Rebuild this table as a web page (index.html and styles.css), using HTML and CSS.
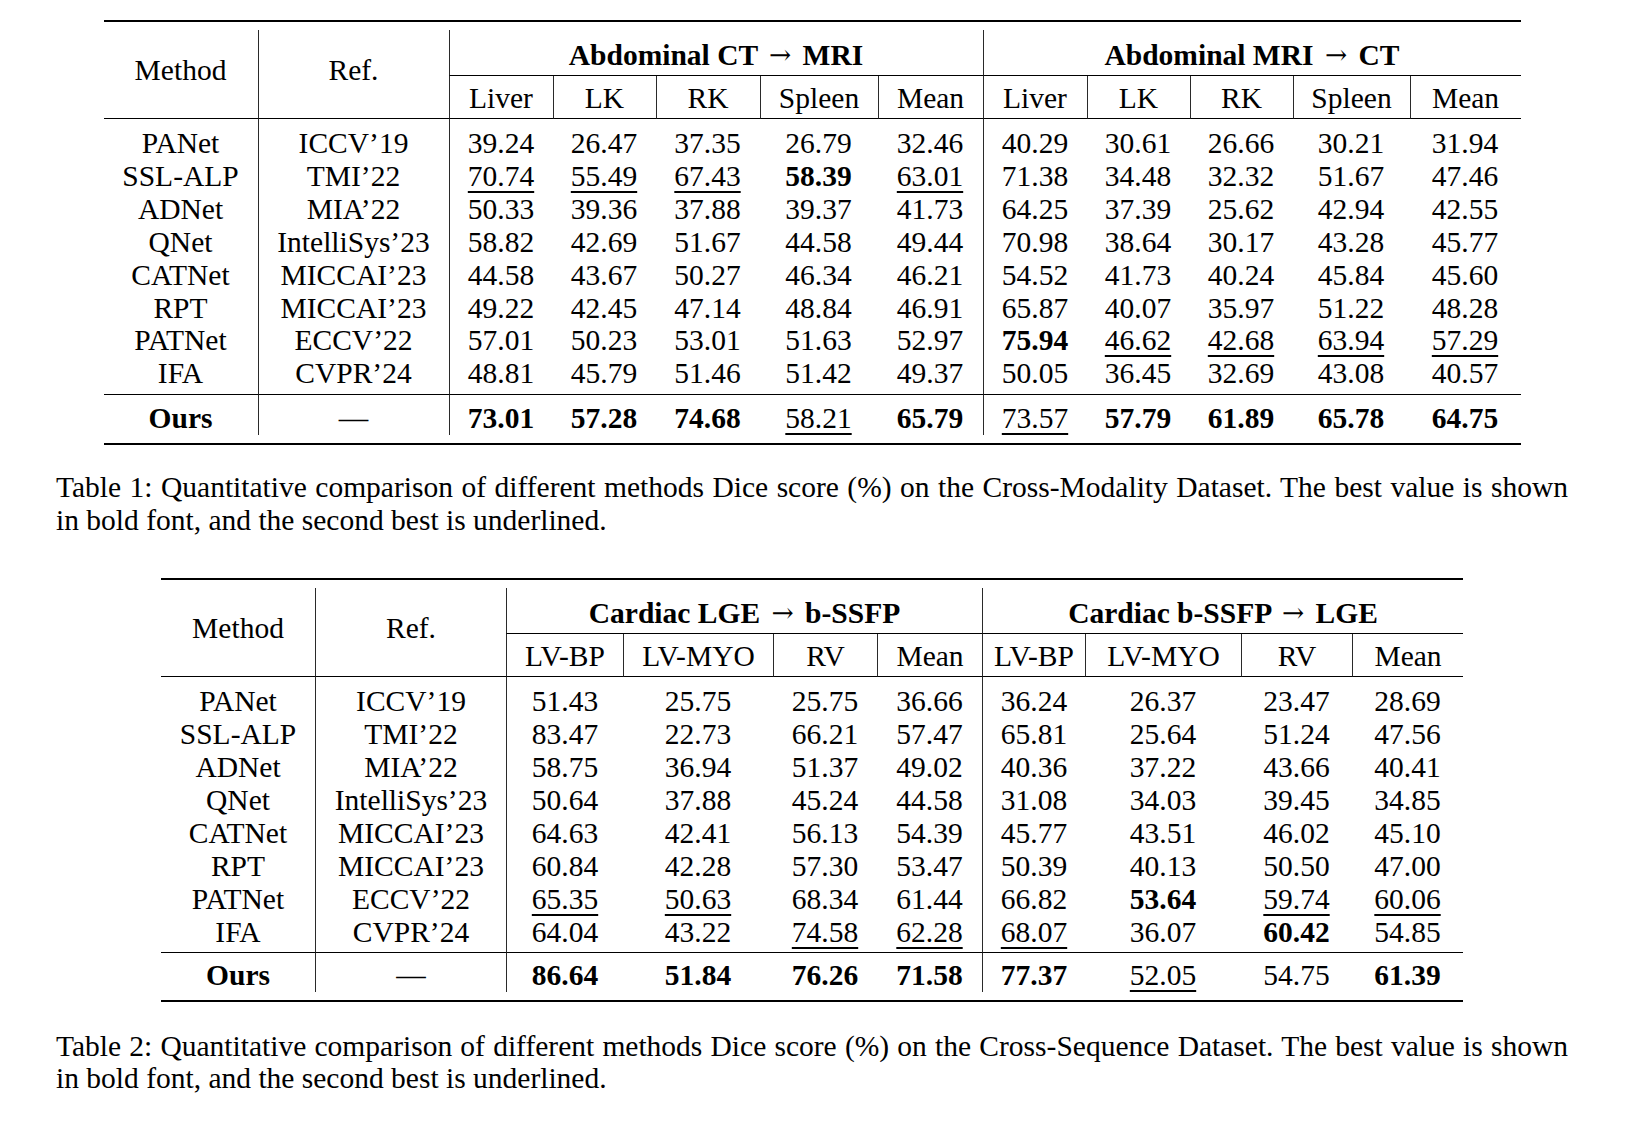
FILE: index.html
```html
<!DOCTYPE html>
<html lang="en">
<head>
<meta charset="utf-8">
<title>Results tables</title>
<link rel="stylesheet" href="styles.css">
</head>
<body>
<div class="page">
  <table class="res t1">
    <colgroup>
      <col><col><col><col><col><col><col><col><col><col><col><col>
    </colgroup>
    <tbody>
      <tr class="sp-top"><td colspan="12"></td></tr>
      <tr class="grp">
        <td rowspan="2" class="hd">Method</td>
        <td rowspan="2" class="hd vl">Ref.</td>
        <td colspan="5" class="gh vl">Abdominal CT <span class="arr">→</span> MRI</td>
        <td colspan="5" class="gh vl">Abdominal MRI <span class="arr">→</span> CT</td>
      </tr>
      <tr class="sub">
        <td class="vl">Liver</td><td class="vl">LK</td><td class="vl">RK</td><td class="vl">Spleen</td><td class="vl">Mean</td>
        <td class="vl">Liver</td><td class="vl">LK</td><td class="vl">RK</td><td class="vl">Spleen</td><td class="vl">Mean</td>
      </tr>
      <tr class="first">
        <td>PANet</td><td class="vl">ICCV’19</td>
        <td class="vl">39.24</td><td>26.47</td><td>37.35</td><td>26.79</td><td>32.46</td>
        <td class="vl">40.29</td><td>30.61</td><td>26.66</td><td>30.21</td><td>31.94</td>
      </tr>
      <tr>
        <td>SSL-ALP</td><td class="vl">TMI’22</td>
        <td class="vl"><span class="u">70.74</span></td><td><span class="u">55.49</span></td><td><span class="u">67.43</span></td><td><span class="b">58.39</span></td><td><span class="u">63.01</span></td>
        <td class="vl">71.38</td><td>34.48</td><td>32.32</td><td>51.67</td><td>47.46</td>
      </tr>
      <tr>
        <td>ADNet</td><td class="vl">MIA’22</td>
        <td class="vl">50.33</td><td>39.36</td><td>37.88</td><td>39.37</td><td>41.73</td>
        <td class="vl">64.25</td><td>37.39</td><td>25.62</td><td>42.94</td><td>42.55</td>
      </tr>
      <tr>
        <td>QNet</td><td class="vl">IntelliSys’23</td>
        <td class="vl">58.82</td><td>42.69</td><td>51.67</td><td>44.58</td><td>49.44</td>
        <td class="vl">70.98</td><td>38.64</td><td>30.17</td><td>43.28</td><td>45.77</td>
      </tr>
      <tr>
        <td>CATNet</td><td class="vl">MICCAI’23</td>
        <td class="vl">44.58</td><td>43.67</td><td>50.27</td><td>46.34</td><td>46.21</td>
        <td class="vl">54.52</td><td>41.73</td><td>40.24</td><td>45.84</td><td>45.60</td>
      </tr>
      <tr>
        <td>RPT</td><td class="vl">MICCAI’23</td>
        <td class="vl">49.22</td><td>42.45</td><td>47.14</td><td>48.84</td><td>46.91</td>
        <td class="vl">65.87</td><td>40.07</td><td>35.97</td><td>51.22</td><td>48.28</td>
      </tr>
      <tr>
        <td>PATNet</td><td class="vl">ECCV’22</td>
        <td class="vl">57.01</td><td>50.23</td><td>53.01</td><td>51.63</td><td>52.97</td>
        <td class="vl"><span class="b">75.94</span></td><td><span class="u">46.62</span></td><td><span class="u">42.68</span></td><td><span class="u">63.94</span></td><td><span class="u">57.29</span></td>
      </tr>
      <tr class="last">
        <td>IFA</td><td class="vl">CVPR’24</td>
        <td class="vl">48.81</td><td>45.79</td><td>51.46</td><td>51.42</td><td>49.37</td>
        <td class="vl">50.05</td><td>36.45</td><td>32.69</td><td>43.08</td><td>40.57</td>
      </tr>
      <tr class="ours">
        <td><span class="b">Ours</span></td><td class="vl">—</td>
        <td class="vl"><span class="b">73.01</span></td><td><span class="b">57.28</span></td><td><span class="b">74.68</span></td><td><span class="u">58.21</span></td><td><span class="b">65.79</span></td>
        <td class="vl"><span class="u">73.57</span></td><td><span class="b">57.79</span></td><td><span class="b">61.89</span></td><td><span class="b">65.78</span></td><td><span class="b">64.75</span></td>
      </tr>
      <tr class="sp-bot"><td colspan="12"></td></tr>
    </tbody>
  </table>
  <p class="cap"><span class="cap-l1">Table 1: Quantitative comparison of different methods Dice score (%) on the Cross-Modality Dataset. The best value is shown</span> in bold font, and the second best is underlined.</p>

  <table class="res t2">
    <colgroup>
      <col><col><col><col><col><col><col><col><col><col>
    </colgroup>
    <tbody>
      <tr class="sp-top"><td colspan="10"></td></tr>
      <tr class="grp">
        <td rowspan="2" class="hd">Method</td>
        <td rowspan="2" class="hd vl">Ref.</td>
        <td colspan="4" class="gh vl">Cardiac LGE <span class="arr">→</span> b-SSFP</td>
        <td colspan="4" class="gh vl">Cardiac b-SSFP <span class="arr">→</span> LGE</td>
      </tr>
      <tr class="sub">
        <td class="vl">LV-BP</td><td class="vl">LV-MYO</td><td class="vl">RV</td><td class="vl">Mean</td>
        <td class="vl">LV-BP</td><td class="vl">LV-MYO</td><td class="vl">RV</td><td class="vl">Mean</td>
      </tr>
      <tr class="first">
        <td>PANet</td><td class="vl">ICCV’19</td>
        <td class="vl">51.43</td><td>25.75</td><td>25.75</td><td>36.66</td>
        <td class="vl">36.24</td><td>26.37</td><td>23.47</td><td>28.69</td>
      </tr>
      <tr>
        <td>SSL-ALP</td><td class="vl">TMI’22</td>
        <td class="vl">83.47</td><td>22.73</td><td>66.21</td><td>57.47</td>
        <td class="vl">65.81</td><td>25.64</td><td>51.24</td><td>47.56</td>
      </tr>
      <tr>
        <td>ADNet</td><td class="vl">MIA’22</td>
        <td class="vl">58.75</td><td>36.94</td><td>51.37</td><td>49.02</td>
        <td class="vl">40.36</td><td>37.22</td><td>43.66</td><td>40.41</td>
      </tr>
      <tr>
        <td>QNet</td><td class="vl">IntelliSys’23</td>
        <td class="vl">50.64</td><td>37.88</td><td>45.24</td><td>44.58</td>
        <td class="vl">31.08</td><td>34.03</td><td>39.45</td><td>34.85</td>
      </tr>
      <tr>
        <td>CATNet</td><td class="vl">MICCAI’23</td>
        <td class="vl">64.63</td><td>42.41</td><td>56.13</td><td>54.39</td>
        <td class="vl">45.77</td><td>43.51</td><td>46.02</td><td>45.10</td>
      </tr>
      <tr>
        <td>RPT</td><td class="vl">MICCAI’23</td>
        <td class="vl">60.84</td><td>42.28</td><td>57.30</td><td>53.47</td>
        <td class="vl">50.39</td><td>40.13</td><td>50.50</td><td>47.00</td>
      </tr>
      <tr>
        <td>PATNet</td><td class="vl">ECCV’22</td>
        <td class="vl"><span class="u">65.35</span></td><td><span class="u">50.63</span></td><td>68.34</td><td>61.44</td>
        <td class="vl">66.82</td><td><span class="b">53.64</span></td><td><span class="u">59.74</span></td><td><span class="u">60.06</span></td>
      </tr>
      <tr class="last">
        <td>IFA</td><td class="vl">CVPR’24</td>
        <td class="vl">64.04</td><td>43.22</td><td><span class="u">74.58</span></td><td><span class="u">62.28</span></td>
        <td class="vl"><span class="u">68.07</span></td><td>36.07</td><td><span class="b">60.42</span></td><td>54.85</td>
      </tr>
      <tr class="ours">
        <td><span class="b">Ours</span></td><td class="vl">—</td>
        <td class="vl"><span class="b">86.64</span></td><td><span class="b">51.84</span></td><td><span class="b">76.26</span></td><td><span class="b">71.58</span></td>
        <td class="vl"><span class="b">77.37</span></td><td><span class="u">52.05</span></td><td>54.75</td><td><span class="b">61.39</span></td>
      </tr>
      <tr class="sp-bot"><td colspan="10"></td></tr>
    </tbody>
  </table>
  <p class="cap cap2"><span class="cap-l1">Table 2: Quantitative comparison of different methods Dice score (%) on the Cross-Sequence Dataset. The best value is shown</span> in bold font, and the second best is underlined.</p>
</div>
</body>
</html>
```

FILE: styles.css
```css
html, body {
  margin: 0;
  padding: 0;
  background: #ffffff;
  color: #000000;
  font-family: "Liberation Serif", "Times New Roman", "DejaVu Serif", serif;
}

.page {
  width: 1512px;
  padding: 20px 0 0 56px;
}

.res {
  border-collapse: separate;
  border-spacing: 0;
  table-layout: fixed;
  margin: 0 auto;
  font-size: 29.5px;
}

.t1 { width: 1417px; }
.t2 { width: 1302px; }

.t1 col:nth-child(1)  { width: 154px; }
.t1 col:nth-child(2)  { width: 191px; }
.t1 col:nth-child(3)  { width: 104px; }
.t1 col:nth-child(4)  { width: 103px; }
.t1 col:nth-child(5)  { width: 104px; }
.t1 col:nth-child(6)  { width: 118px; }
.t1 col:nth-child(7)  { width: 105px; }
.t1 col:nth-child(8)  { width: 104px; }
.t1 col:nth-child(9)  { width: 103px; }
.t1 col:nth-child(10) { width: 103px; }
.t1 col:nth-child(11) { width: 117px; }
.t1 col:nth-child(12) { width: 111px; }

.t2 col:nth-child(1)  { width: 154px; }
.t2 col:nth-child(2)  { width: 191px; }
.t2 col:nth-child(3)  { width: 117px; }
.t2 col:nth-child(4)  { width: 150px; }
.t2 col:nth-child(5)  { width: 104px; }
.t2 col:nth-child(6)  { width: 105px; }
.t2 col:nth-child(7)  { width: 103px; }
.t2 col:nth-child(8)  { width: 156px; }
.t2 col:nth-child(9)  { width: 111px; }
.t2 col:nth-child(10) { width: 111px; }

.res td {
  padding: 0;
  text-align: center;
  vertical-align: top;
  white-space: nowrap;
  line-height: 32.9px;
}

.res td.vl {
  border-left: 1px solid #2a2a2a;
}

/* top rule + gap before vertical lines start */
.res .sp-top td {
  padding: 8px 0 0 0;
  border-top: 2px solid #000;
  line-height: 0;
  font-size: 0;
}

/* bottom gap + bottom rule */
.res .sp-bot td {
  padding: 8px 0 0 0;
  border-bottom: 2px solid #000;
  line-height: 0;
  font-size: 0;
}

.res .grp td {
  line-height: 33px;
  padding: 9px 0 3px;
}

.res td.gh {
  font-weight: bold;
  border-bottom: 1px solid #000;
}

.res .grp td.hd {
  border-bottom: 1px solid #000;
  padding: 24px 0 0;
}

.res .sub td {
  line-height: 33px;
  padding: 6px 0 3px;
  border-bottom: 1px solid #000;
}

.res .first td { padding-top: 8px; }
.res .last td { padding-bottom: 4px; }
.t2 .last td { padding-bottom: 3px; }

.res .ours td {
  border-top: 1px solid #000;
  padding-top: 7px;
  line-height: 33px;
}
.t2 .ours td { padding-top: 6px; }

.arr {
  display: inline-block;
  line-height: 0;
  vertical-align: 0.05em;
  margin: 0 4px;
  font-weight: normal;
  font-family: "DejaVu Serif", "Liberation Serif", serif;
  font-size: 0.9em;
}

.b { font-weight: bold; }

.u {
  text-decoration: underline;
  text-decoration-thickness: 1.5px;
  text-underline-offset: 5px;
}

.cap {
  margin: 26px 0 41px;
  font-size: 29.5px;
  line-height: 33px;
  text-align: justify;
}

.cap-l1 {
  display: block;
  white-space: nowrap;
  text-align: justify;
  text-align-last: justify;
}

.cap2 {
  margin-top: 28px;
  line-height: 32px;
}
```
